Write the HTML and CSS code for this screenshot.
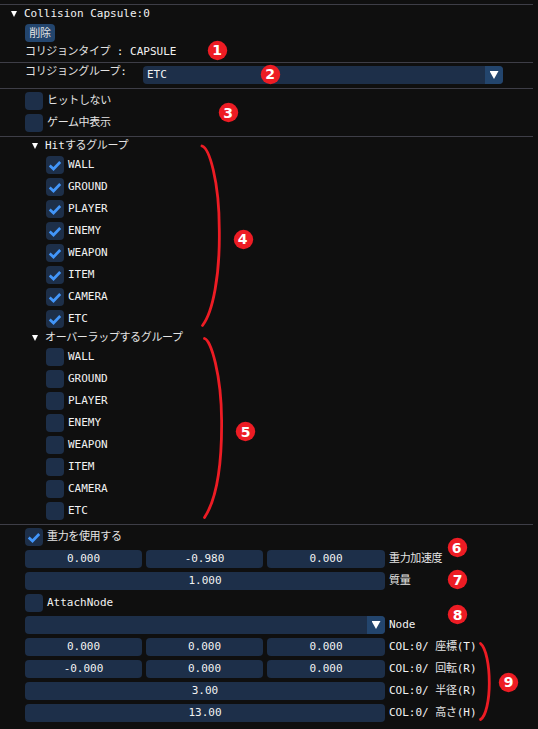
FILE: index.html
```html
<!DOCTYPE html>
<html lang="ja">
<head>
<meta charset="utf-8">
<title>Collision Capsule</title>
<link rel="stylesheet" href="styles.css">
</head>
<body>
<main class="panel">
  <section class="section head">
    <div class="tree"><i class="tri"></i><span>Collision Capsule:0</span></div>
    <button class="button jp">削除</button>
    <div class="line"><span class="jp">コリジョンタイプ</span> : CAPSULE</div>
  </section>
  <section class="section group">
    <div class="group-label"><span class="jp">コリジョングループ</span>:</div>
    <div class="combo"><span class="value">ETC</span><span class="arrow"><i class="tri big"></i></span></div>
  </section>
  <section class="section rows">
    <label class="row"><i class="box"></i><span class="jp">ヒットしない</span></label>
    <label class="row"><i class="box"></i><span class="jp">ゲーム中表示</span></label>
  </section>
  <section class="section trees">
    <div class="tree sub"><i class="tri"></i><span>Hit<span class="jp">するグループ</span></span></div>
    <div class="rows indent">
      <label class="row"><i class="box on"><svg viewBox="0 0 18 18"><path d="M3.700 9.500 7.500 13 14.200 6"/></svg></i>WALL</label>
      <label class="row"><i class="box on"><svg viewBox="0 0 18 18"><path d="M3.700 9.500 7.500 13 14.200 6"/></svg></i>GROUND</label>
      <label class="row"><i class="box on"><svg viewBox="0 0 18 18"><path d="M3.700 9.500 7.500 13 14.200 6"/></svg></i>PLAYER</label>
      <label class="row"><i class="box on"><svg viewBox="0 0 18 18"><path d="M3.700 9.500 7.500 13 14.200 6"/></svg></i>ENEMY</label>
      <label class="row"><i class="box on"><svg viewBox="0 0 18 18"><path d="M3.700 9.500 7.500 13 14.200 6"/></svg></i>WEAPON</label>
      <label class="row"><i class="box on"><svg viewBox="0 0 18 18"><path d="M3.700 9.500 7.500 13 14.200 6"/></svg></i>ITEM</label>
      <label class="row"><i class="box on"><svg viewBox="0 0 18 18"><path d="M3.700 9.500 7.500 13 14.200 6"/></svg></i>CAMERA</label>
      <label class="row"><i class="box on"><svg viewBox="0 0 18 18"><path d="M3.700 9.500 7.500 13 14.200 6"/></svg></i>ETC</label>
    </div>
    <div class="tree sub"><i class="tri"></i><span class="jp">オーバーラップするグループ</span></div>
    <div class="rows indent">
      <label class="row"><i class="box"></i>WALL</label>
      <label class="row"><i class="box"></i>GROUND</label>
      <label class="row"><i class="box"></i>PLAYER</label>
      <label class="row"><i class="box"></i>ENEMY</label>
      <label class="row"><i class="box"></i>WEAPON</label>
      <label class="row"><i class="box"></i>ITEM</label>
      <label class="row"><i class="box"></i>CAMERA</label>
      <label class="row"><i class="box"></i>ETC</label>
    </div>
  </section>
  <section class="section rows">
    <label class="row"><i class="box on"><svg viewBox="0 0 18 18"><path d="M3.700 9.500 7.500 13 14.200 6"/></svg></i><span class="jp">重力を使用する</span></label>
    <div class="row"><div class="fields three"><b>0.000</b><b>-0.980</b><b>0.000</b></div><span class="jp">重力加速度</span></div>
    <div class="row"><div class="fields"><b>1.000</b></div><span class="jp">質量</span></div>
    <label class="row"><i class="box"></i>AttachNode</label>
    <div class="row"><div class="combo"><span class="value"></span><span class="arrow"><i class="tri big"></i></span></div>Node</div>
    <div class="row"><div class="fields three"><b>0.000</b><b>0.000</b><b>0.000</b></div><span class="mixed">COL:0/ <span class="jp">座標</span>(T)</span></div>
    <div class="row"><div class="fields three"><b>-0.000</b><b>0.000</b><b>0.000</b></div><span class="mixed">COL:0/ <span class="jp">回転</span>(R)</span></div>
    <div class="row"><div class="fields"><b>3.00</b></div><span class="mixed">COL:0/ <span class="jp">半径</span>(R)</span></div>
    <div class="row"><div class="fields"><b>13.00</b></div><span class="mixed">COL:0/ <span class="jp">高さ</span>(H)</span></div>
  </section>
</main>
<svg class="notes" viewBox="0 0 538 729">
  <g class="braces">
    <path d="M202 146C209 148 219.300 180 219.300 230C220 275 213 312 202.500 325.500"/>
    <path d="M204.500 338.500C211 340 221.300 375 221.600 420C222 465 216 500 204.500 517.500"/>
    <path d="M480.500 643.500C486 648 489.300 665 489.300 683C489.300 700 486 716 480.500 719.500"/>
  </g>
  <g class="badges">
    <circle cx="217.500" cy="50.500" r="9.700"/><circle cx="270.500" cy="74.500" r="9.700"/><circle cx="228.500" cy="112.500" r="9.700"/>
    <circle cx="243.500" cy="239.500" r="9.700"/><circle cx="245.500" cy="431.500" r="9.700"/><circle cx="457.500" cy="547.500" r="9.700"/>
    <circle cx="457.500" cy="579.500" r="9.700"/><circle cx="457.500" cy="614.500" r="9.700"/><circle cx="508.500" cy="682.500" r="9.700"/>
  </g>
  <g class="numbers">
    <text x="217" y="55">1</text><text x="270" y="79">2</text><text x="228" y="118">3</text>
    <text x="242.500" y="244">4</text><text x="245.500" y="437">5</text><text x="456.500" y="553">6</text>
    <text x="457.500" y="585">7</text><text x="457.500" y="620">8</text><text x="508.500" y="687">9</text>
  </g>
</svg>
</body>
</html>
```
FILE: styles.css
```css
* { box-sizing: border-box; }
body {
  margin: 0;
  background: #0f0f0f;
  color: #f2f2f2;
  font: 11px/18px "DejaVu Sans Mono", "Noto Sans CJK JP", monospace;
  overflow: hidden;
}
.panel { width: 533px; height: 729px; padding-top: 4px; }
.section { border-top: 1px solid #3e3e47; padding-left: 25px; }
.jp { font-family: "Noto Sans CJK JP", sans-serif; color: #e4e4e4; letter-spacing: -0.35px; }
.head { height: 58px; }
.tree {
  display: flex;
  align-items: center;
  gap: 7px;
  height: 16px;
  line-height: 16px;
  margin-left: -14px;
}
.head .tree { height: 18px; }
.tree.sub { margin-left: 7px; height: 19px; line-height: 15px; align-items: flex-start; }
.tri {
  width: 6px;
  height: 6px;
  background: #fff;
  clip-path: polygon(0 0, 100% 0, 50% 100%);
  flex: none;
}
.tree.sub .tri { margin-top: 6px; }
.tri.big { width: 9px; height: 8px; }
.button {
  display: block;
  width: 30px;
  height: 18px;
  margin: 1px 0 0;
  padding: 0 0 2px;
  border: 0;
  border-radius: 4px;
  background: #23456d;
  font-size: 11px;
  line-height: 15px;
}
.line { height: 18px; line-height: 17px; white-space: pre; }
.group { height: 26px; display: flex; padding-top: 3px; }
.group-label { width: 118px; line-height: 8px; }
.combo {
  display: flex;
  width: 360px;
  height: 18px;
  border-radius: 4px;
  background: #1d2f49;
  overflow: hidden;
}
.value { flex: 1; padding-left: 4px; line-height: 17px; }
.arrow {
  display: flex;
  width: 18px;
  align-items: center;
  justify-content: center;
  background: #23456d;
}
.rows { display: flex; flex-direction: column; gap: 4px; }
.section.rows { padding-top: 3px; padding-bottom: 4px; }
.row { display: flex; gap: 4px; height: 18px; line-height: 18px; white-space: pre; }
.row > .jp, .mixed { line-height: 15px; }
.box {
  width: 18px;
  height: 18px;
  border-radius: 4px;
  background: #1d2f49;
  flex: none;
}
.box svg { display: block; width: 18px; height: 18px; }
.box path { fill: none; stroke: #4296fa; stroke-width: 2.7; }
.indent { padding-left: 21px; }
.trees { height: 388px; }
.trees .indent + .tree { margin-top: 1px; }
.fields { display: grid; grid-template-columns: 1fr; gap: 4px; width: 360px; }
.fields.three { grid-template-columns: 117px 117px 1fr; }
.fields b {
  border-radius: 4px;
  background: #1d2f49;
  font-weight: normal;
  text-align: center;
  line-height: 17px;
}
/* Callouts lie over the panel. */
.notes { position: absolute; left: 0; top: 0; width: 538px; height: 729px; }
.braces { fill: none; stroke: #ed1c24; stroke-width: 2.8; stroke-linecap: round; }
.badges { fill: #ed1c24; }
.numbers { fill: #fff; font: bold 14px "DejaVu Sans", sans-serif; text-anchor: middle; }
```
